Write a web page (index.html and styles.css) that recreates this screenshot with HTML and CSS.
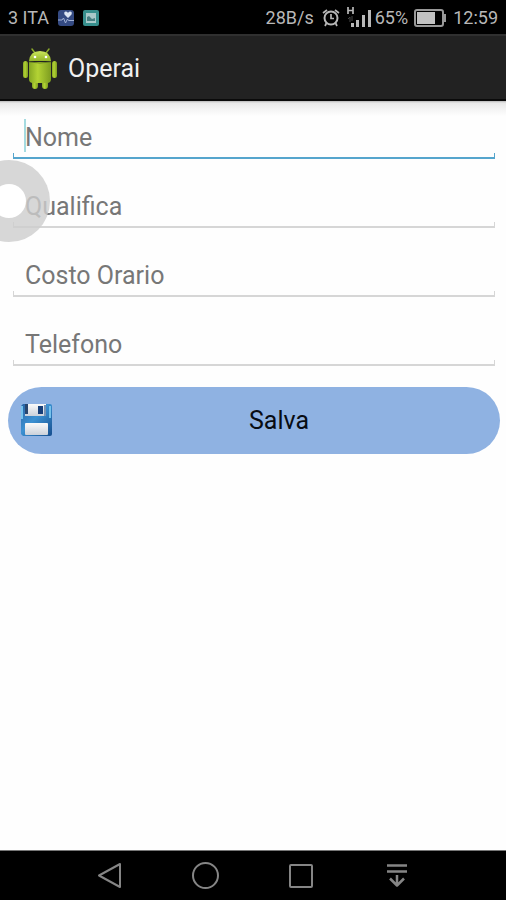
FILE: index.html
```html
<!DOCTYPE html>
<html lang="it">
<head>
<meta charset="utf-8">
<meta name="viewport" content="width=device-width, initial-scale=1">
<title>Operai</title>
<link rel="stylesheet" href="styles.css">
</head>
<body>
<div class="status">
  <div class="status-group">
    <span>3 ITA</span>
    <svg class="health" width="18" height="18" viewBox="0 0 18 18" aria-hidden="true">
      <rect x="1" y="1" width="16" height="16" rx="3" fill="#344a82"/>
      <path d="M11 9 7.500 5.500Q6.500 2.500 9 2.500q1.500 0 2 1.500.5-1.500 2-1.500 2.500 0 1.500 3z" fill="#dbe4f2"/>
      <path d="M1 11h4l1.500-2 2 5 2-4 1 1.500H17" fill="none" stroke="#9fb0d4"/>
    </svg>
    <svg width="16" height="16" viewBox="0 0 16 16" aria-hidden="true">
      <rect width="16" height="16" rx="2" fill="#378f8d"/>
      <rect x="3" y="3" width="10" height="10" fill="#a9c9c9"/>
      <path d="M4 11V7l2-1 3 3 3-1v3z" fill="#477f82"/>
    </svg>
  </div>
  <div class="status-group status-right">
    <span>28B/s</span>
    <svg class="alarm" width="18" height="20" viewBox="0 0 18 20" fill="none" stroke="#b8b8b8" stroke-width="2" aria-hidden="true">
      <circle cx="9" cy="10" r="6.500"/>
      <path d="M9 6v4.500h3M1 5l4-3M17 5l-4-3M4.500 15 3 18M13.500 15l1.500 3" stroke-width="1.700"/>
    </svg>
    <svg class="signal" width="26" height="22" viewBox="0 3 26 22" aria-hidden="true">
      <path d="M2 3v7M7 3v7M2 6.500h5" fill="none" stroke="#b8b8b8" stroke-width="1.700"/>
      <path d="M2 15l2-2v5M6 12v5" fill="none" stroke="#444"/>
      <path d="M5 19h3v4H5zM10 16h3v7h-3zM16 11h3v12h-3zM22 6h3v17h-3z" fill="#b8b8b8"/>
    </svg>
    <span>65%</span>
    <svg class="battery" width="33" height="18" viewBox="0 0 33 18" aria-hidden="true">
      <rect x="1" y="1" width="28" height="16" rx="2" fill="#000" stroke="#999" stroke-width="2"/>
      <path d="M3 3h18v12H3z" fill="#c2c2c2"/>
      <path d="M30 5h2v8h-2z" fill="#999"/>
    </svg>
    <span>12:59</span>
  </div>
</div>
<header class="bar">
  <svg width="36" height="42" viewBox="0 0 36 42" aria-hidden="true">
    <defs>
      <linearGradient id="body" x1="0" y1="0" x2="1" y2="0">
        <stop offset="0" stop-color="#86a823"/><stop offset=".4" stop-color="#b3d334"/><stop offset="1" stop-color="#7d9c20"/>
      </linearGradient>
      <linearGradient id="head" x1="0" y1="0" x2="0" y2="1">
        <stop offset="0" stop-color="#cbe65c"/><stop offset="1" stop-color="#93b529"/>
      </linearGradient>
    </defs>
    <path d="M10 1l3 4M27 1l-3 4" stroke="#8caa2b" stroke-width="1.500" stroke-linecap="round"/>
    <g fill="url(#body)">
      <rect x="1" y="13" width="5" height="17" rx="2.500"/>
      <rect x="30" y="13" width="5" height="17" rx="2.500"/>
      <rect x="10" y="29" width="6" height="12" rx="3"/>
      <rect x="20" y="29" width="6" height="12" rx="3"/>
      <path d="M7 14h22v17q0 4-4 4H11q-4 0-4-4z"/>
    </g>
    <path d="M7 13Q8 3 18 3t11 10z" fill="url(#head)"/>
    <path d="M7 14q11 2 22 0" fill="none" stroke="#6b8422"/>
    <circle cx="13" cy="9" r="1.300" fill="#fff"/><circle cx="24" cy="9" r="1.300" fill="#fff"/>
  </svg>
  <h1>Operai</h1>
</header>
<main>
  <form>
    <div class="field active"><input type="text" placeholder="Nome" aria-label="Nome"></div>
    <div class="field"><input type="text" placeholder="Qualifica" aria-label="Qualifica"></div>
    <div class="field"><input type="text" placeholder="Costo Orario" aria-label="Costo Orario"></div>
    <div class="field"><input type="tel" placeholder="Telefono" aria-label="Telefono"></div>
    <button class="save" type="button">
      <svg width="32" height="34" viewBox="0 0 32 34" aria-hidden="true">
        <defs>
          <linearGradient id="disk" x1="0" y1="0" x2="1" y2="1">
            <stop offset="0" stop-color="#2863a5"/><stop offset=".45" stop-color="#3c91d2"/><stop offset="1" stop-color="#164e8e"/>
          </linearGradient>
          <linearGradient id="metal" x1="0" y1="0" x2="0" y2="1">
            <stop offset="0" stop-color="#fafafa"/><stop offset="1" stop-color="#cbd1da"/>
          </linearGradient>
        </defs>
        <path d="M3 0h27q2 0 2 2v28q0 2-2 2H3l-2-2V2z" fill="url(#disk)"/>
        <path d="M2 2v13M30 2v12" stroke="#75c2ec" stroke-width="2"/>
        <path d="M5 0h21v12H5z" fill="url(#metal)"/>
        <path d="M5 0h3v10H5z" fill="#28466f"/>
        <path d="M18 2h5v8h-5z" fill="#173f79"/>
        <path d="M24 1h2v11h-2z" fill="#7894b6"/>
        <rect x="5" y="19" width="23" height="12" rx="1" fill="url(#metal)"/>
      </svg>
      <span>Salva</span>
    </button>
  </form>
  <div class="assist" aria-hidden="true"></div>
</main>
<nav class="nav">
  <button type="button" aria-label="Indietro"><svg width="28" height="28" viewBox="0 0 28 28"><path d="M25 2v23L4 13.500z"/></svg></button>
  <button type="button" aria-label="Home"><svg width="28" height="28" viewBox="0 0 28 28"><circle cx="14.500" cy="13.500" r="12.500"/></svg></button>
  <button type="button" aria-label="Recenti"><svg width="28" height="28" viewBox="0 0 28 28"><rect x="3" y="3" width="22" height="22" rx="1"/></svg></button>
  <button type="button" aria-label="Nascondi barra"><svg width="28" height="28" viewBox="0 0 28 28"><path d="M4 3.500h20M4 9.500h20M14 13v11M7 16.500l7 7 7-7" stroke-width="2.500"/></svg></button>
</nav>
</body>
</html>
```
FILE: styles.css
```css
* { box-sizing: border-box; }

body {
  margin: 0;
  min-height: 100vh;
  display: flex;
  flex-direction: column;
  background: #fefefe;
  font-family: Roboto, "Liberation Sans", sans-serif;
}

svg { display: block; flex: none; }

.status {
  display: flex;
  justify-content: space-between;
  align-items: center;
  height: 34px;
  padding: 1px 8px 0;
  background: #000;
  color: #b8b8b8;
  font-size: 18px;
}

.status-group { display: flex; align-items: center; gap: 8px; }
.status-right { gap: 6px; }
.alarm { margin-left: 2px; }
.signal { margin-right: -3px; }

.bar {
  display: flex;
  align-items: center;
  gap: 10px;
  height: 67px;
  padding: 2px 22px 0;
  background: #222;
  border-top: 2px solid #303030;
  border-bottom: 2px solid #0a0a0a;
  color: #f0f0f0;
}

.bar h1 { margin: 0; font-size: 25px; font-weight: 400; }

main {
  position: relative;
  flex: 1;
  padding: 14px 6px 0 8px;
  background: linear-gradient(#b8b8b8, #e8e8e8 2px, #f3f3f3 8px, #fefefe 15px);
}

form { display: flex; flex-direction: column; gap: 25px; }

.field {
  --line: #d6d6d6;
  position: relative;
  height: 44px;
  margin: 0 5px;
  background:
    linear-gradient(var(--line), var(--line)) left bottom / 1px 6px no-repeat,
    linear-gradient(var(--line), var(--line)) right bottom / 1px 6px no-repeat,
    linear-gradient(var(--line), var(--line)) left bottom / 100% 2px no-repeat;
}

.field.active { --line: #55a5cd; }

.field.active::before {
  content: "";
  position: absolute;
  left: 11px;
  top: 4px;
  width: 2px;
  height: 33px;
  background: #a5dbe0;
}

.field input {
  display: block;
  width: 100%;
  height: 44px;
  padding: 0 12px;
  border: 0;
  outline: 0;
  background: none;
  color: #222;
  font: 25px Roboto, "Liberation Sans", sans-serif;
}

.field input::placeholder { color: #777; opacity: 1; }

.save {
  display: flex;
  align-items: center;
  gap: 18px;
  height: 67px;
  margin-top: -4px;
  padding: 0 12px;
  border: 0;
  border-radius: 34px;
  background: #8fb2e2;
  color: #080c12;
  font: 25px Roboto, "Liberation Sans", sans-serif;
}

.save span { flex: 1; text-align: center; }

.assist {
  position: absolute;
  left: -32px;
  top: 59px;
  width: 82px;
  height: 82px;
  border: 24px solid rgba(205, 205, 205, 0.8);
  border-radius: 50%;
  background: rgba(255, 255, 255, 0.9);
  background-clip: padding-box;
  clip-path: inset(0 0 0 32px);
}

.nav {
  display: flex;
  justify-content: center;
  gap: 68px;
  height: 50px;
  padding-top: 11px;
  background: #000;
  border-top: 1px solid #777;
}

.nav button { padding: 0; border: 0; height: 28px; background: none; }
.nav svg { fill: none; stroke: #858585; stroke-width: 2; stroke-linejoin: round; }
```
